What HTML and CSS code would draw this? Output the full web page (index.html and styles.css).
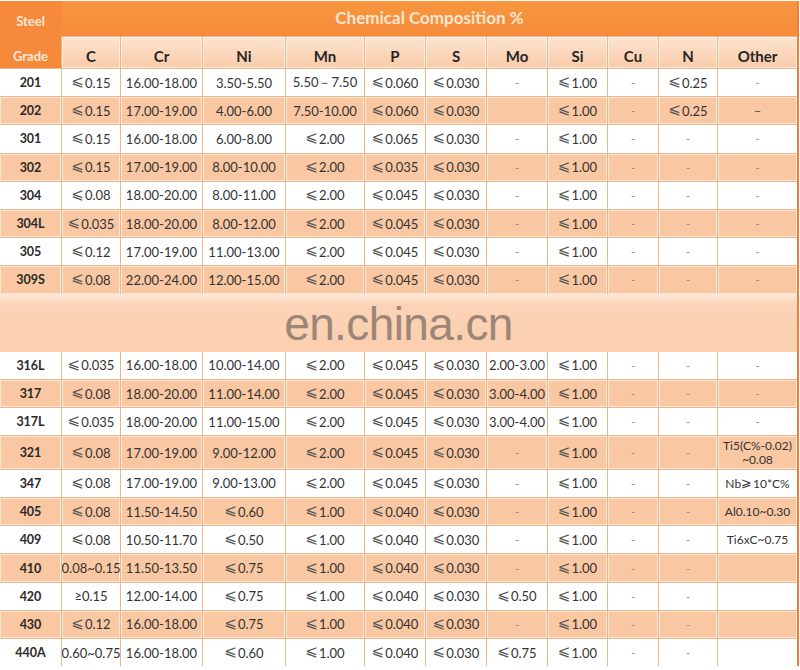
FILE: index.html
```html
<!DOCTYPE html>
<html lang="en">
<head>
<meta charset="utf-8">
<title>Steel Grade Chemical Composition</title>
<link rel="stylesheet" href="styles.css">
</head>
<body>
<div class="sheet">
  <div class="steel"><span>Steel</span><span>Grade</span></div>
  <div class="title">Chemical Composition %</div>
  <div class="row head">
    <div>C</div><div>Cr</div><div>Ni</div><div>Mn</div><div>P</div><div>S</div><div>Mo</div><div>Si</div><div>Cu</div><div>N</div><div>Other</div>
  </div>

  <div class="row w"><div class="g">201</div><div><span class="le">⩽</span>0.15</div><div>16.00-18.00</div><div>3.50-5.50</div><div>5.50－7.50</div><div><span class="le">⩽</span>0.060</div><div><span class="le">⩽</span>0.030</div><div class="d">-</div><div><span class="le">⩽</span>1.00</div><div class="d">-</div><div><span class="le">⩽</span>0.25</div><div class="d">-</div></div>
  <div class="row p"><div class="g">202</div><div><span class="le">⩽</span>0.15</div><div>17.00-19.00</div><div>4.00-6.00</div><div>7.50-10.00</div><div><span class="le">⩽</span>0.060</div><div><span class="le">⩽</span>0.030</div><div></div><div><span class="le">⩽</span>1.00</div><div class="d">-</div><div><span class="le">⩽</span>0.25</div><div class="d2">–</div></div>
  <div class="row w"><div class="g">301</div><div><span class="le">⩽</span>0.15</div><div>16.00-18.00</div><div>6.00-8.00</div><div><span class="le">⩽</span>2.00</div><div><span class="le">⩽</span>0.065</div><div><span class="le">⩽</span>0.030</div><div class="d">-</div><div><span class="le">⩽</span>1.00</div><div class="d">-</div><div class="d">-</div><div class="d">-</div></div>
  <div class="row p"><div class="g">302</div><div><span class="le">⩽</span>0.15</div><div>17.00-19.00</div><div>8.00-10.00</div><div><span class="le">⩽</span>2.00</div><div><span class="le">⩽</span>0.035</div><div><span class="le">⩽</span>0.030</div><div class="d">-</div><div><span class="le">⩽</span>1.00</div><div class="d">-</div><div class="d">-</div><div class="d">-</div></div>
  <div class="row w"><div class="g">304</div><div><span class="le">⩽</span>0.08</div><div>18.00-20.00</div><div>8.00-11.00</div><div><span class="le">⩽</span>2.00</div><div><span class="le">⩽</span>0.045</div><div><span class="le">⩽</span>0.030</div><div class="d">-</div><div><span class="le">⩽</span>1.00</div><div class="d">-</div><div class="d">-</div><div class="d">-</div></div>
  <div class="row p"><div class="g">304L</div><div><span class="le">⩽</span>0.035</div><div>18.00-20.00</div><div>8.00-12.00</div><div><span class="le">⩽</span>2.00</div><div><span class="le">⩽</span>0.045</div><div><span class="le">⩽</span>0.030</div><div class="d">-</div><div><span class="le">⩽</span>1.00</div><div class="d">-</div><div class="d">-</div><div class="d">-</div></div>
  <div class="row w"><div class="g">305</div><div><span class="le">⩽</span>0.12</div><div>17.00-19.00</div><div>11.00-13.00</div><div><span class="le">⩽</span>2.00</div><div><span class="le">⩽</span>0.045</div><div><span class="le">⩽</span>0.030</div><div class="d">-</div><div><span class="le">⩽</span>1.00</div><div class="d">-</div><div class="d">-</div><div class="d">-</div></div>
  <div class="row p"><div class="g">309S</div><div><span class="le">⩽</span>0.08</div><div>22.00-24.00</div><div>12.00-15.00</div><div><span class="le">⩽</span>2.00</div><div><span class="le">⩽</span>0.045</div><div><span class="le">⩽</span>0.030</div><div class="d">-</div><div><span class="le">⩽</span>1.00</div><div class="d">-</div><div class="d">-</div><div class="d">-</div></div>

  <div class="blur"><span class="mark">en.china.cn</span></div>

  <div class="row w"><div class="g">316L</div><div><span class="le">⩽</span>0.035</div><div>16.00-18.00</div><div>10.00-14.00</div><div><span class="le">⩽</span>2.00</div><div><span class="le">⩽</span>0.045</div><div><span class="le">⩽</span>0.030</div><div>2.00-3.00</div><div><span class="le">⩽</span>1.00</div><div class="d">-</div><div class="d">-</div><div class="d">-</div></div>
  <div class="row p"><div class="g">317</div><div><span class="le">⩽</span>0.08</div><div>18.00-20.00</div><div>11.00-14.00</div><div><span class="le">⩽</span>2.00</div><div><span class="le">⩽</span>0.045</div><div><span class="le">⩽</span>0.030</div><div>3.00-4.00</div><div><span class="le">⩽</span>1.00</div><div class="d">-</div><div class="d">-</div><div class="d">-</div></div>
  <div class="row w"><div class="g">317L</div><div><span class="le">⩽</span>0.035</div><div>18.00-20.00</div><div>11.00-15.00</div><div><span class="le">⩽</span>2.00</div><div><span class="le">⩽</span>0.045</div><div><span class="le">⩽</span>0.030</div><div>3.00-4.00</div><div><span class="le">⩽</span>1.00</div><div class="d">-</div><div class="d">-</div><div class="d">-</div></div>
  <div class="row p"><div class="g">321</div><div><span class="le">⩽</span>0.08</div><div>17.00-19.00</div><div>9.00-12.00</div><div><span class="le">⩽</span>2.00</div><div><span class="le">⩽</span>0.045</div><div><span class="le">⩽</span>0.030</div><div class="d">-</div><div><span class="le">⩽</span>1.00</div><div class="d">-</div><div class="d">-</div><div class="other2">Ti5(C%-0.02)<br>~0.08</div></div>
  <div class="row w"><div class="g">347</div><div><span class="le">⩽</span>0.08</div><div>17.00-19.00</div><div>9.00-13.00</div><div><span class="le">⩽</span>2.00</div><div><span class="le">⩽</span>0.045</div><div><span class="le">⩽</span>0.030</div><div class="d">-</div><div><span class="le">⩽</span>1.00</div><div class="d">-</div><div class="d">-</div><div class="other">Nb<span class="ge">⩾</span>10*C%</div></div>
  <div class="row p"><div class="g">405</div><div><span class="le">⩽</span>0.08</div><div>11.50-14.50</div><div><span class="le">⩽</span>0.60</div><div><span class="le">⩽</span>1.00</div><div><span class="le">⩽</span>0.040</div><div><span class="le">⩽</span>0.030</div><div class="d">-</div><div><span class="le">⩽</span>1.00</div><div class="d">-</div><div class="d">-</div><div class="other">Al0.10~0.30</div></div>
  <div class="row w"><div class="g">409</div><div><span class="le">⩽</span>0.08</div><div>10.50-11.70</div><div><span class="le">⩽</span>0.50</div><div><span class="le">⩽</span>1.00</div><div><span class="le">⩽</span>0.040</div><div><span class="le">⩽</span>0.030</div><div class="d">-</div><div><span class="le">⩽</span>1.00</div><div class="d">-</div><div class="d">-</div><div class="other">Ti6xC~0.75</div></div>
  <div class="row p"><div class="g">410</div><div>0.08~0.15</div><div>11.50-13.50</div><div><span class="le">⩽</span>0.75</div><div><span class="le">⩽</span>1.00</div><div><span class="le">⩽</span>0.040</div><div><span class="le">⩽</span>0.030</div><div class="d">-</div><div><span class="le">⩽</span>1.00</div><div class="d">-</div><div class="d">-</div><div></div></div>
  <div class="row w"><div class="g">420</div><div>≥0.15</div><div>12.00-14.00</div><div><span class="le">⩽</span>0.75</div><div><span class="le">⩽</span>1.00</div><div><span class="le">⩽</span>0.040</div><div><span class="le">⩽</span>0.030</div><div><span class="le">⩽</span>0.50</div><div><span class="le">⩽</span>1.00</div><div class="d">-</div><div class="d">-</div><div></div></div>
  <div class="row p"><div class="g">430</div><div><span class="le">⩽</span>0.12</div><div>16.00-18.00</div><div><span class="le">⩽</span>0.75</div><div><span class="le">⩽</span>1.00</div><div><span class="le">⩽</span>0.040</div><div><span class="le">⩽</span>0.030</div><div class="d">-</div><div><span class="le">⩽</span>1.00</div><div class="d">-</div><div class="d">-</div><div></div></div>
  <div class="row w"><div class="g">440A</div><div>0.60~0.75</div><div>16.00-18.00</div><div><span class="le">⩽</span>0.60</div><div><span class="le">⩽</span>1.00</div><div><span class="le">⩽</span>0.040</div><div><span class="le">⩽</span>0.030</div><div><span class="le">⩽</span>0.75</div><div><span class="le">⩽</span>1.00</div><div class="d">-</div><div class="d">-</div><div></div></div>
</div>
</body>
</html>
```

FILE: styles.css
```css
html, body {
  margin: 0;
  padding: 0;
  background: #ffffff;
}

body {
  padding-top: 1px;
  font-family: Lato, "DejaVu Sans", sans-serif;
  color: #333333;
}

.sheet {
  width: 797px;
  display: grid;
  grid-template-columns: 61px 58px 81px 82px 78px 60px 60px 60px 59px 50px 58px 79px;
  grid-template-rows: 35px 31px repeat(8, 27.2px) 56.4px repeat(3, 27.2px) 32.4px repeat(7, 27.2px);
  gap: 1px;
  background: #eab68c;
  border-right: 2px solid #e8823a;
}

.row {
  display: contents;
}

.row > div {
  display: flex;
  align-items: center;
  justify-content: center;
  font-size: 13px;
  white-space: nowrap;
  overflow: hidden;
  box-shadow: inset 0 0 0 1px rgba(255, 255, 255, 0.55);
}

.w > div {
  background: #ffffff;
}

.p > div {
  background: #f9c7a2;
}

.le,
.ge {
  font-family: "DejaVu Sans", sans-serif;
  font-size: 15px;
  line-height: 1;
  color: #555555;
  margin-right: 1px;
  position: relative;
  top: -1px;
}

.ge {
  font-size: 13px;
  color: #333333;
}

.steel {
  grid-column: 1;
  grid-row: 1 / span 2;
  background: #f68a3a;
  display: flex;
  flex-direction: column;
  justify-content: space-between;
  align-items: center;
  padding: 12px 0 4px;
  font-weight: 700;
  font-size: 13px;
  color: #fde8d8;
}

.title {
  grid-column: 2 / span 11;
  grid-row: 1;
  background: linear-gradient(#f8963f, #f68b3a);
  box-shadow: -1px 0 0 #f68a3a;
  display: flex;
  align-items: center;
  justify-content: center;
  font-weight: 700;
  font-size: 17px;
  color: #fde6d2;
  padding-bottom: 2px;
}

.head > div {
  background: linear-gradient(#fde4d1, #f9cba8);
  font-weight: 700;
  font-size: 15px;
  color: #262626;
  align-items: flex-end;
  padding-bottom: 3px;
}

.g {
  font-weight: 700;
  font-size: 12.5px !important;
  color: #2a2a2a;
}

.d {
  color: #8a8a8a;
  font-size: 11px !important;
}

.d2 {
  color: #555555;
}

.other {
  font-size: 12px !important;
}

.other2 {
  font-size: 12px !important;
  line-height: 14px;
  text-align: center;
  align-items: flex-start !important;
  padding-top: 3px;
}

.blur {
  grid-column: 1 / -1;
  background: linear-gradient(#fde7d8 0%, #fbd3b6 18%, #fbcfae 100%);
  display: flex;
  align-items: center;
  justify-content: center;
  margin-top: -1px;
  margin-bottom: -1px;
}

.mark {
  font-family: "Liberation Sans", Arial, sans-serif;
  font-size: 46px;
  letter-spacing: -0.6px;
  color: #9d8678;
  padding-top: 2px;
}
```
